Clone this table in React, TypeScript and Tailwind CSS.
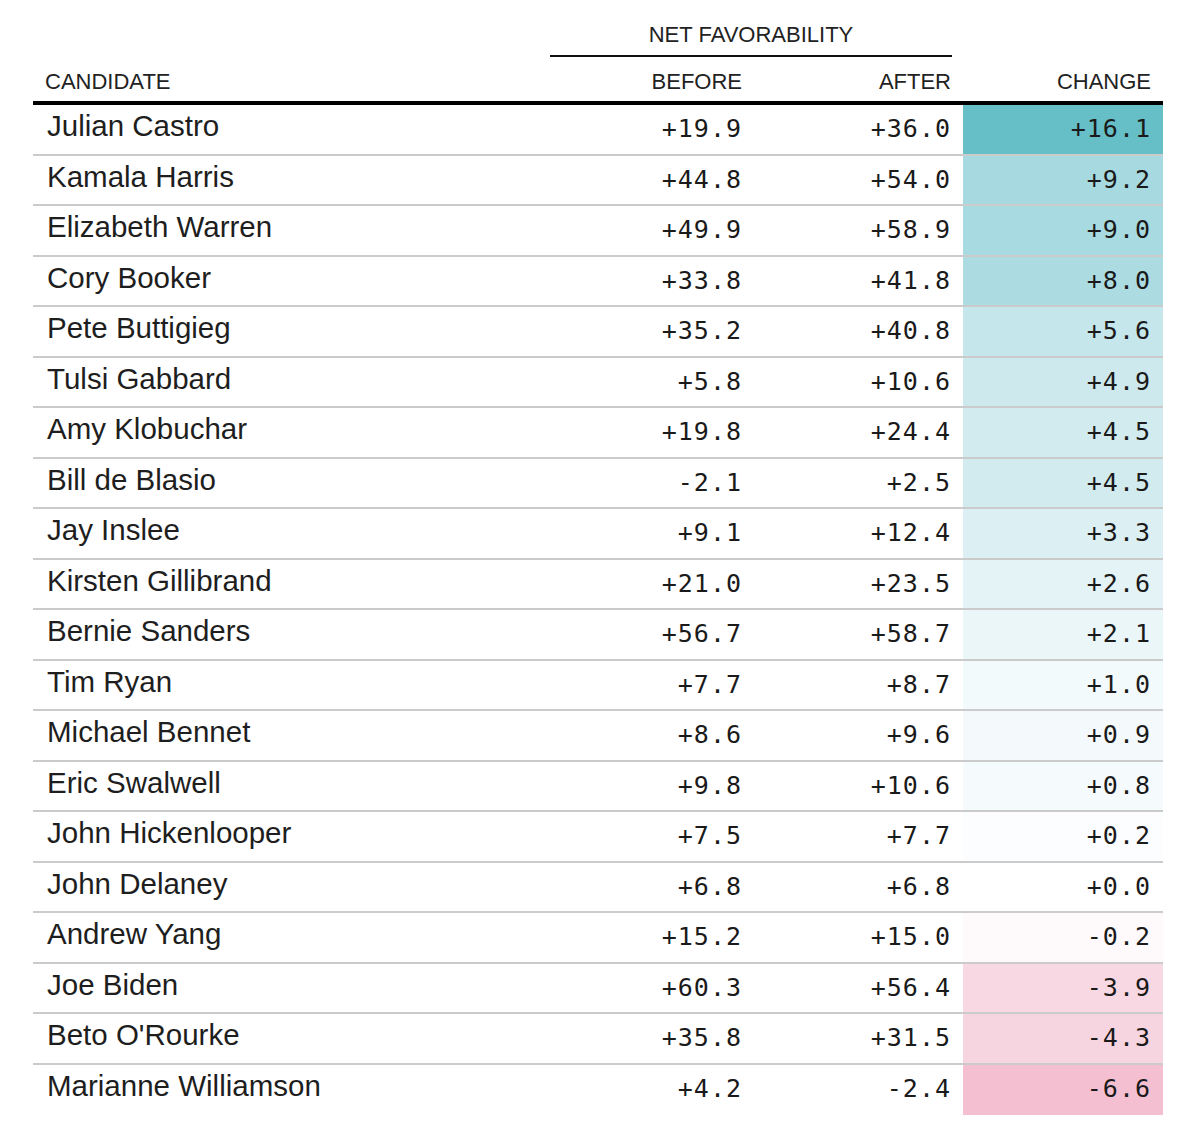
import React from "react";

type Row = { name: string; before: string; after: string; change: string; bg: string };

const rows: Row[] = [
  { name: "Julian Castro", before: "+19.9", after: "+36.0", change: "+16.1", bg: "bg-[#66bec7]" },
  { name: "Kamala Harris", before: "+44.8", after: "+54.0", change: "+9.2", bg: "bg-[#a6d9e0]" },
  { name: "Elizabeth Warren", before: "+49.9", after: "+58.9", change: "+9.0", bg: "bg-[#a8dae1]" },
  { name: "Cory Booker", before: "+33.8", after: "+41.8", change: "+8.0", bg: "bg-[#acdce2]" },
  { name: "Pete Buttigieg", before: "+35.2", after: "+40.8", change: "+5.6", bg: "bg-[#c5e6eb]" },
  { name: "Tulsi Gabbard", before: "+5.8", after: "+10.6", change: "+4.9", bg: "bg-[#cde9ed]" },
  { name: "Amy Klobuchar", before: "+19.8", after: "+24.4", change: "+4.5", bg: "bg-[#d2ebef]" },
  { name: "Bill de Blasio", before: "-2.1", after: "+2.5", change: "+4.5", bg: "bg-[#d2ebef]" },
  { name: "Jay Inslee", before: "+9.1", after: "+12.4", change: "+3.3", bg: "bg-[#dcf0f3]" },
  { name: "Kirsten Gillibrand", before: "+21.0", after: "+23.5", change: "+2.6", bg: "bg-[#e4f3f6]" },
  { name: "Bernie Sanders", before: "+56.7", after: "+58.7", change: "+2.1", bg: "bg-[#eaf6f8]" },
  { name: "Tim Ryan", before: "+7.7", after: "+8.7", change: "+1.0", bg: "bg-[#f3fafb]" },
  { name: "Michael Bennet", before: "+8.6", after: "+9.6", change: "+0.9", bg: "bg-[#f4fafb]" },
  { name: "Eric Swalwell", before: "+9.8", after: "+10.6", change: "+0.8", bg: "bg-[#f5fbfc]" },
  { name: "John Hickenlooper", before: "+7.5", after: "+7.7", change: "+0.2", bg: "bg-[#fbfdfe]" },
  { name: "John Delaney", before: "+6.8", after: "+6.8", change: "+0.0", bg: "bg-[#ffffff]" },
  { name: "Andrew Yang", before: "+15.2", after: "+15.0", change: "-0.2", bg: "bg-[#fefafb]" },
  { name: "Joe Biden", before: "+60.3", after: "+56.4", change: "-3.9", bg: "bg-[#f8d8e2]" },
  { name: "Beto O'Rourke", before: "+35.8", after: "+31.5", change: "-4.3", bg: "bg-[#f7d5e0]" },
  { name: "Marianne Williamson", before: "+4.2", after: "-2.4", change: "-6.6", bg: "bg-[#f4c0d1]" },
];

const num =
  "font-['DejaVu_Sans_Mono',monospace] text-[25px] leading-[30px] tracking-[1px] text-right pr-[12px] pt-[9px] text-[#1a1a1a]";

export default function App() {
  return (
    <div className="min-h-[1145px] w-[1200px] bg-white text-[#222] font-['Liberation_Sans',Arial,sans-serif]">
      <div className="ml-[33px] w-[1130px]">
        <div className="flex h-[57px]">
          <div className="w-[517px]" />
          <div className="flex w-[413px] flex-col justify-end pr-[11px]">
            <div className="pb-[7px] text-center text-[22px] leading-[26px]">NET FAVORABILITY</div>
            <div className="h-[2px] bg-[#111]" />
          </div>
        </div>
        <div className="flex h-[48px] items-end border-b-4 border-black pb-[6px] text-[22px] leading-[26px]">
          <div className="w-[517px] pl-[12px]">CANDIDATE</div>
          <div className="w-[204px] pr-[12px] text-right">BEFORE</div>
          <div className="w-[209px] pr-[12px] text-right">AFTER</div>
          <div className="w-[200px] pr-[12px] text-right">CHANGE</div>
        </div>
        {rows.map((r, i) => (
          <div
            key={r.name}
            className={
              i === rows.length - 1
                ? "flex h-[50.5px]"
                : "flex h-[50.5px] border-b-2 border-[#cbcbcb]"
            }
          >
            <div className="w-[517px] pl-[14px] pt-[4px] text-[29.5px] leading-[34px] text-[#1e1e1e]">
              {r.name}
            </div>
            <div className={`w-[204px] ${num}`}>{r.before}</div>
            <div className={`w-[209px] ${num}`}>{r.after}</div>
            <div className={`w-[200px] ${r.bg} ${num}`}>{r.change}</div>
          </div>
        ))}
      </div>
    </div>
  );
}
